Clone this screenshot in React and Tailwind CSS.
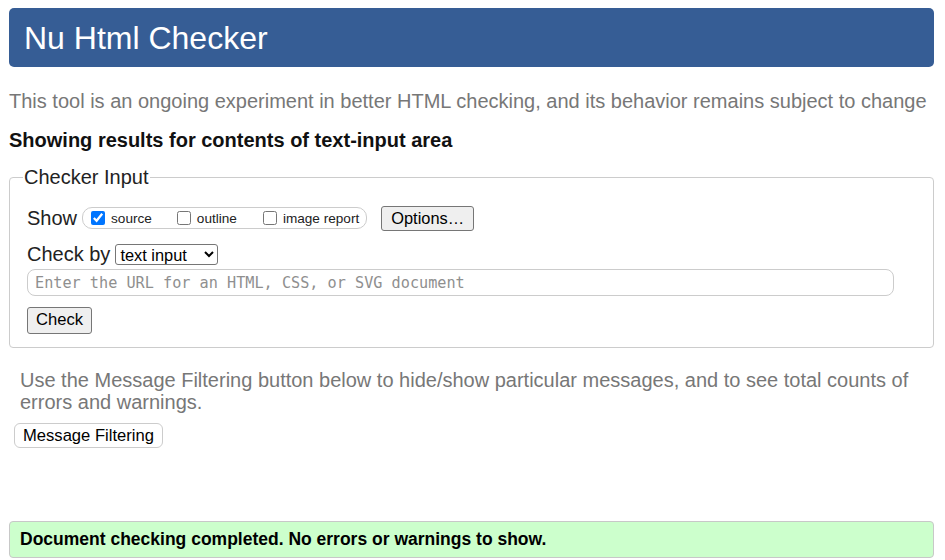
import React from "react";

export default function App() {
  return (
    <div className="min-h-[560px] bg-white pl-[9px] pr-[11px] pt-[8px] text-[#222] font-['Liberation_Sans',Arial,sans-serif]">
      <div className="flex h-[59px] items-center rounded-[5px] bg-[#365d95] pl-[15px] text-[32px] text-white">
        Nu Html Checker
      </div>
      <p className="mt-[23px] text-[20px] leading-[23px] text-[#777] whitespace-nowrap">
        This tool is an ongoing experiment in better HTML checking, and its behavior remains subject to change
      </p>
      <p className="mt-[16px] text-[20px] leading-[23px] font-bold text-[#111]">
        Showing results for contents of text-input area
      </p>
      <fieldset className="mt-[14px] rounded-[4px] border border-[#ccc] px-[17px] pb-[13px]">
        <legend className="-ml-[4px] px-[1px] text-[20px] leading-[23px]">Checker Input</legend>
        <div className="mt-[16px] flex h-[26px] items-center">
          <span className="text-[20px] leading-[23px]">Show</span>
          <div className="ml-[5px] flex h-[22px] items-center rounded-[10px] border border-[#ccc] pl-[8px] pr-[7px] text-[13.6px]">
            <label className="flex items-center">
              <input type="checkbox" defaultChecked className="m-0 h-[14px] w-[14px]" />
              <span className="ml-[6px] mt-[3px]">source</span>
            </label>
            <label className="ml-[25px] flex items-center">
              <input type="checkbox" className="m-0 h-[14px] w-[14px]" />
              <span className="ml-[6px] mt-[3px]">outline</span>
            </label>
            <label className="ml-[26px] flex items-center">
              <input type="checkbox" className="m-0 h-[14px] w-[14px]" />
              <span className="ml-[6px] mt-[3px]">image report</span>
            </label>
          </div>
          <button className="ml-[14px] h-[25px] rounded-[3px] border border-[#767676] bg-[#efefef] px-[9px] text-[16.4px] leading-[20px] text-black">
            Options…
          </button>
        </div>
        <div className="mt-[12px] flex h-[23px] items-center">
          <span className="text-[20px] leading-[23px]">Check by</span>
          <select className="ml-[5px] h-[21px] w-[103px] rounded-[3px] border border-[#767676] bg-white pl-0 text-[16.4px] leading-[18px] text-black" defaultValue="text">
            <option value="address">address</option>
            <option value="file">file upload</option>
            <option value="text">text input</option>
          </select>
        </div>
        <input
          type="text"
          placeholder="Enter the URL for an HTML, CSS, or SVG document"
          className="mt-[3px] block h-[27px] w-[867px] rounded-[8px] border border-[#ccc] pl-[7px] font-['DejaVu_Sans_Mono',monospace] text-[15.2px] placeholder:text-[#8f8f8f]"
        />
        <button className="mt-[11px] block h-[27px] w-[65px] rounded-[3px] border border-[#767676] bg-[#efefef] text-[16.6px] text-black">
          Check
        </button>
      </fieldset>
      <p className="mx-[11px] mt-[21px] text-[20px] leading-[22px] text-[#777]">
        Use the Message Filtering button below to hide/show particular messages, and to see total counts of errors and warnings.
      </p>
      <button className="ml-[5px] mt-[10px] block h-[25px] rounded-[6px] border border-[#ccc] bg-white px-[8px] text-[16.6px] leading-[20px] text-black">
        Message Filtering
      </button>
      <div className="mt-[73px] flex h-[37px] items-center rounded-[4px] border border-[#c8c8c8] bg-[#ccffcc] pl-[10px] text-[17.5px] font-bold text-black">
        Document checking completed. No errors or warnings to show.
      </div>
    </div>
  );
}
